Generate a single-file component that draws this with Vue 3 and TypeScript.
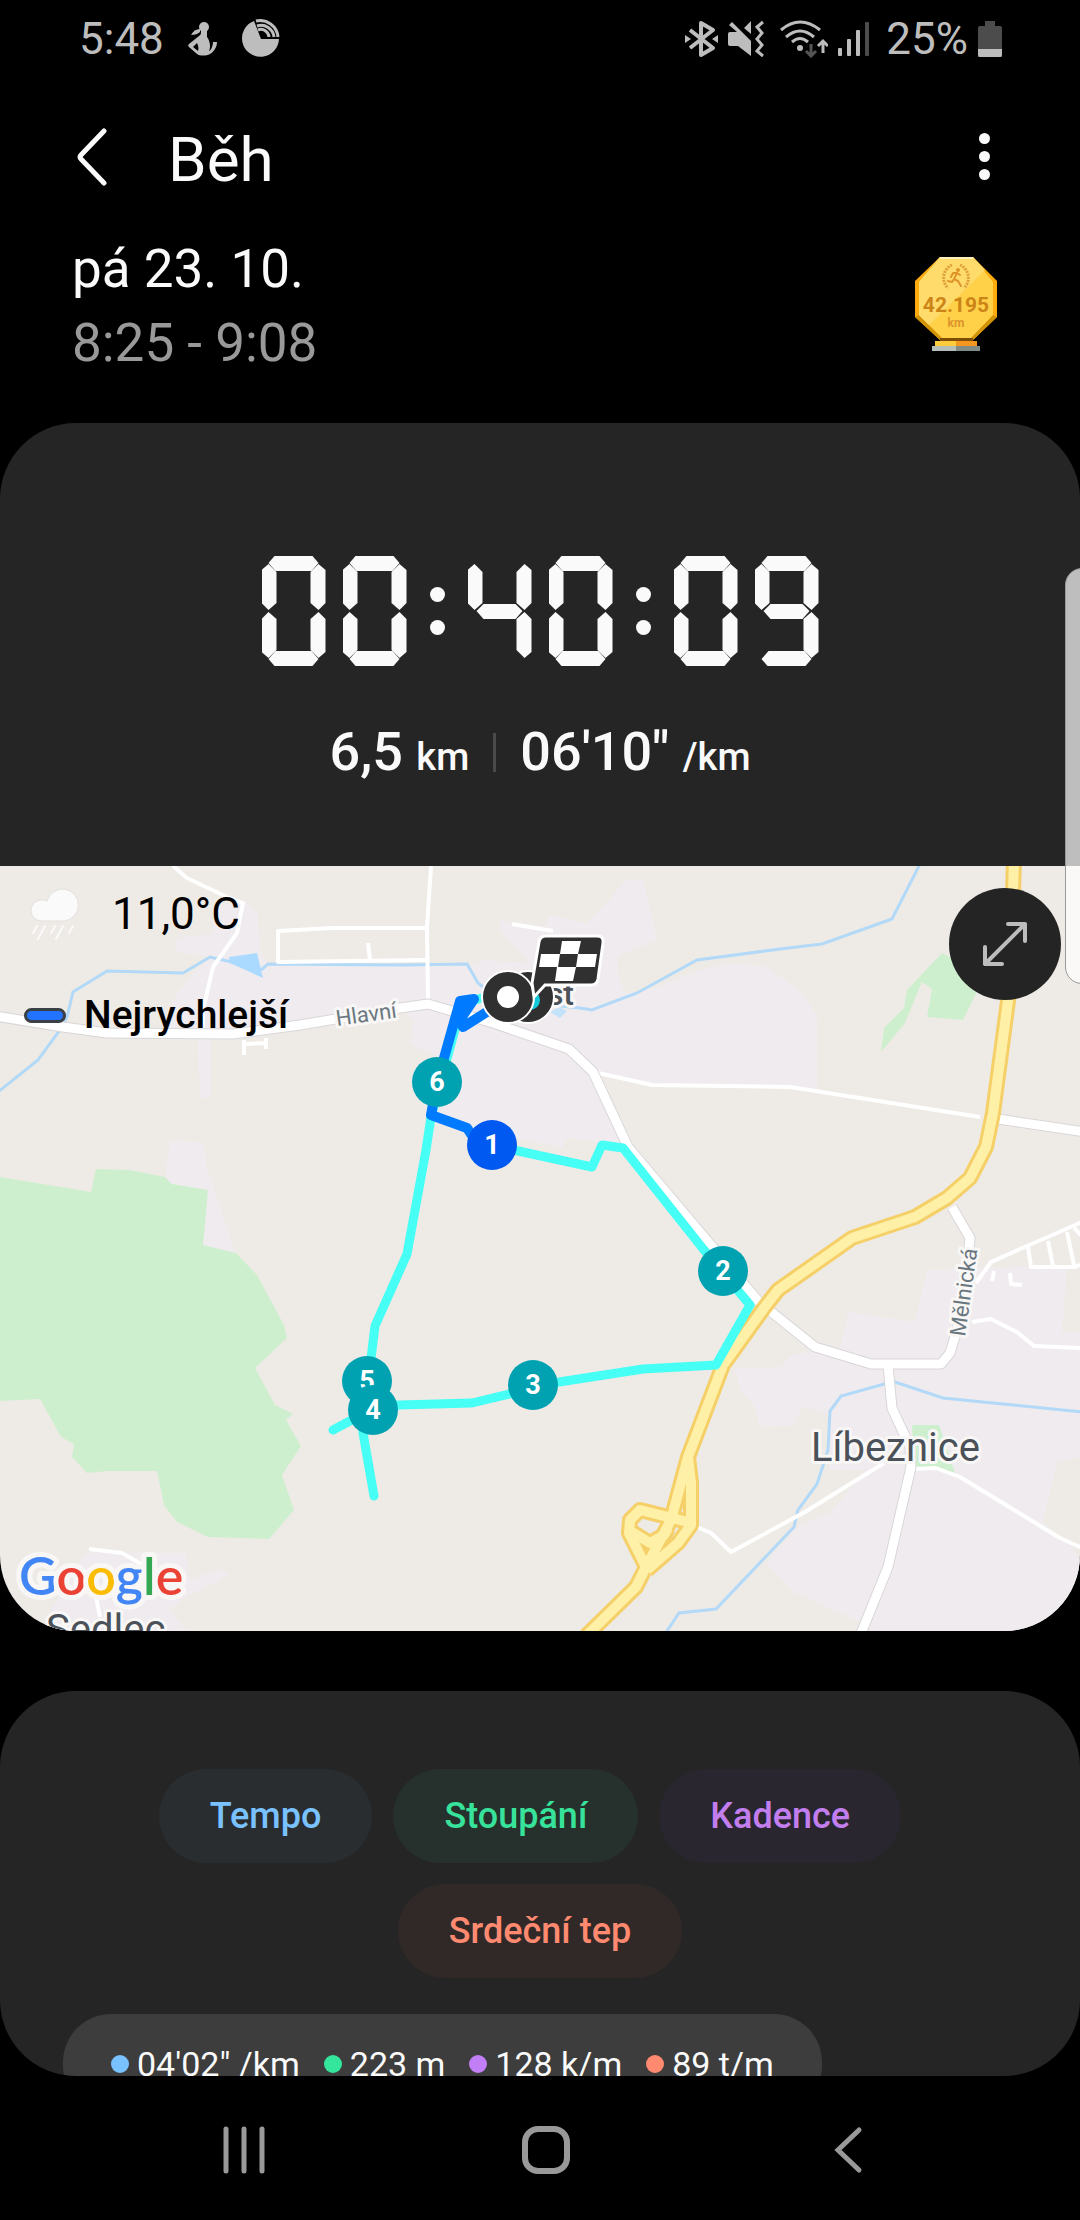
<script setup lang="ts">
interface Chip {
  label: string
  tone: string
}

interface Reading {
  text: string
  tone: string
}

interface Marker {
  n: number
  x: number
  y: number
  tone: string
}

const duration = '00:40:09'

const segmentsOf: Record<string, string> = {
  '0': 'abcdef',
  '1': 'bc',
  '2': 'abdeg',
  '3': 'abcdg',
  '4': 'bcfg',
  '5': 'acdfg',
  '6': 'acdefg',
  '7': 'abc',
  '8': 'abcdefg',
  '9': 'abcdfg',
}

const cells = duration.split('').map((char) => ({
  char,
  lit: (segmentsOf[char] ?? '').split(''),
}))

const chipRows: Chip[][] = [
  [
    { label: 'Tempo', tone: 'blue' },
    { label: 'Stoupání', tone: 'green' },
    { label: 'Kadence', tone: 'violet' },
  ],
  [{ label: 'Srdeční tep', tone: 'coral' }],
]

const readings: Reading[] = [
  { text: '04\'02" /km', tone: 'blue' },
  { text: '223 m', tone: 'green' },
  { text: '128 k/m', tone: 'violet' },
  { text: '89 t/m', tone: 'coral' },
]

const markers: Marker[] = [
  { n: 6, x: 437, y: 1082, tone: '#00a2b1' },
  { n: 5, x: 367, y: 1381, tone: '#00a2b1' },
  { n: 4, x: 373, y: 1410, tone: '#00a2b1' },
  { n: 3, x: 533, y: 1385, tone: '#00a2b1' },
  { n: 2, x: 723, y: 1271, tone: '#00a2b1' },
  { n: 1, x: 492, y: 1145, tone: '#0059f0' },
]

const mainRoads = [
  'M-5 1016 L63 1027 L107 1033 L233 1034 L300 1025 L400 1008 L428 1004 L493 1023 L569 1049 L593 1072 L628 1147 L759 1302 L815 1347 L871 1364 L941 1364 L950 1353 L957 1330 L967 1267 L970 1238 L952 1207',
  'M888 1365 L892 1408 L910 1447 L911 1467 L888 1567 L860 1636',
  'M998 1119 L1085 1132',
]

const sideRoads = [
  'M173 866 L187 878 L227 897 L243 903 L237 933 L213 967 L203 1010 L203 1030',
  'M427 928 H333 L278 931 V962 L427 960',
  'M431 866 L427 927 L428 1000',
  'M368 943 L370 960',
  'M244 1040 V1055 M266 1038 V1049 M244 1044 L266 1043',
  'M512 924 L553 931',
  'M598 1073 L652 1085 L790 1087 L980 1117',
  'M912 1469 L936 1468 L960 1477 L1060 1538 L1082 1548',
  'M884 1463 L805 1512 L731 1552 L711 1533 L697 1527',
  'M972 1322 L991 1319 L1017 1332 L1034 1346 L1082 1348',
  'M976 1283 L991 1262 L1027 1246 L1082 1222',
  'M1028 1247 L1031 1267 H1075 L1082 1264 M1048 1241 L1053 1266 M1067 1232 L1074 1265 M1074 1228 L1082 1236',
  'M994 1271 L992 1281 M1010 1273 L1011 1284 L1022 1285',
  'M89 1549 L122 1553 L148 1568 M96 1597 L100 1617',
]

const streams = [
  'M-2 1092 L38 1060 L60 1030 L67 1017 L73 992 L107 971 L183 973 L210 957 L232 962',
  'M261 970 L268 964 L400 965 L467 964 L478 983 L500 1000 L580 1008 L592 1010 L637 993 L697 960 L780 949 L822 944 L892 919 L920 864',
  'M895 1382 L943 1398 L1082 1412',
  'M888 1383 L841 1396 L830 1411 L828 1450 L817 1484 L798 1510 L794 1527 L716 1609 L679 1613 L665 1634',
]

const builtUp = [
  'M177 938 L212 934 L214 908 L243 901 L257 911 L261 953 L270 966 H470 L483 960 L530 963 L500 932 L500 920 L547 928 L547 915 L587 923 L627 880 L643 880 L657 940 L617 957 L620 983 L627 993 L657 987 L700 970 L733 963 L767 967 L803 993 L817 1017 L817 1090 L790 1087 L652 1085 L598 1073 L625 1145 L567 1138 L562 1148 L500 1134 L440 1115 L447 1060 L410 1045 L413 1020 L400 1008 L300 1025 L233 1034 L211 1036 V1098 L200 1097 L197 1035 L160 1030 L173 1000 L193 973 L210 957 L175 952 Z',
  'M170 1140 L203 1143 L207 1167 L236 1254 L200 1250 L165 1180 Z',
  'M86 1553 H186 L190 1580 L220 1568 L229 1575 L186 1597 L169 1610 L189 1634 H40 L55 1603 Z',
  'M927 1270 L1067 1265 L1062 1332 L1080 1333 V1457 L1057 1462 L1043 1522 L1072 1547 L1080 1560 V1634 H880 L860 1622 L795 1593 L766 1563 L797 1527 L829 1513 L867 1470 L829 1470 V1413 L802 1407 L795 1425 L759 1427 L755 1407 L740 1390 L735 1368 L781 1367 L791 1355 L840 1347 L848 1312 L915 1322 Z',
]

const greens = [
  'M0 1177 L91 1192 L96 1169 L129 1170 L165 1177 L172 1184 L208 1190 L203 1245 L236 1253 L257 1275 L284 1325 L287 1338 L255 1368 L275 1405 L293 1414 L286 1420 L301 1446 L282 1475 L294 1510 L269 1539 L208 1537 L177 1522 L164 1505 L157 1471 H108 L87 1473 L72 1457 L74 1444 L61 1437 L40 1399 L0 1401 Z',
  'M942 953 L985 975 L963 1020 L927 1017 L932 989 L922 982 L905 1023 L881 1052 L884 1028 L904 1008 L907 990 Z',
  'M912 1425 H939 L955 1473 L914 1467 Z',
]

const highways = [
  'M688 1457 L691 1483 V1525 L678 1543 L647 1570',
  'M688 1522 L640 1510 L630 1520 L629 1533 L645 1565',
  'M668 1528 L664 1535 L650 1543 L632 1532',
  'M1014 860 L1013 893 L1008 1001 L993 1113 L986 1147 L970 1178 L947 1198 L915 1217 L852 1238 L778 1290 L764 1308 L723 1365 L688 1457 L671 1520 L647 1565 L636 1587 L586 1636',
]
</script>

<template>
  <div class="screen">
    <header class="status">
      <div class="status-side">
        <span>5:48</span>
        <svg class="ico-person" width="29" height="35" viewBox="0 0 29 35">
          <circle cx="16" cy="6" r="5" />
          <path d="M12 8 C8 8 5 10 3 14 C7 14 10 13 12 11 Z" />
          <path d="M13 10 h6 v6 c3 4 4 10 2 14 c2 0 4 -6 4 -9 l4 0 c0 6 -4 10 -7 12 c-4 2 -10 2 -13 0 l-8 -7 c-1 -1 -1 -2 0 -3 l10 -8 c2 -1 2 -3 2 -5 Z M9 22 l-4 4 l5 4 c1 -3 0 -6 -1 -8 Z" fill-rule="evenodd" />
        </svg>
        <svg width="39" height="39" viewBox="0 0 39 39">
          <path d="M38 20 A18.500 18.500 0 1 1 13 2 L20 20 Z" />
          <g fill="none" stroke="#bdbdbd" stroke-width="3">
            <path d="M17 11 A8 8 0 0 1 28 18" />
            <path d="M16 7 A13 13 0 0 1 33 18" />
            <path d="M15 2 A18 18 0 0 1 37 18" />
          </g>
        </svg>
      </div>
      <div class="status-side right">
        <svg width="33" height="38" viewBox="0 0 33 38">
          <path d="M5 10 L28 28 L16 35 V3 L28 10 L5 28" fill="none" stroke="#bdbdbd" stroke-width="4" stroke-linejoin="round" />
          <path d="M0 15 L6 19 L0 23 Z M33 15 L27 19 L33 23 Z" />
        </svg>
        <svg class="ico-mute" width="36" height="38" viewBox="0 0 36 38">
          <path d="M2 12 H9 L1 5 L4 2 L23 21 V36 L10 26 H2 Q0 26 0 24 V14 Q0 12 2 12 Z M16 8 L23 1 V14 Z" />
          <path d="M35 2 L29 7 L34 13 L29 19 L34 25 L29 31 L35 36" fill="none" stroke="#bdbdbd" stroke-width="3" />
        </svg>
        <svg class="ico-wifi" width="48" height="38" viewBox="0 0 48 38">
          <g fill="none" stroke="#bdbdbd" stroke-width="3">
            <path d="M1 10 Q20 -6 40 10" />
            <path d="M6 17 Q20 5 34 17" />
            <path d="M12 22 Q20 15 28 22" />
            <path d="M43 33 V22 M38 26 L43 21 L48 26" />
            <path d="M31 24 V34 M26 31 L31 36 L36 31" stroke="#555" />
          </g>
          <circle cx="20" cy="28" r="3" />
        </svg>
        <svg class="ico-signal" width="32" height="34" viewBox="0 0 32 34">
          <rect x="0" y="26" width="4" height="8" rx="1" />
          <rect x="9" y="17" width="4" height="17" rx="1" />
          <rect x="18" y="8" width="4" height="26" rx="1" />
          <rect x="27" y="0" width="4" height="34" rx="1" fill="#4c4c4c" />
        </svg>
        <span class="percent">25%</span>
        <svg width="24" height="36" viewBox="0 0 24 36">
          <path d="M7 0 H17 V5 H22 Q24 5 24 7 V36 H0 V7 Q0 5 2 5 H7 Z" fill="#4c4c4c" />
          <path d="M0 28 H24 V34 Q24 36 22 36 H2 Q0 36 0 34 Z" />
        </svg>
      </div>
    </header>

    <div class="appbar">
      <button class="plain back" type="button" aria-label="Zpět">
        <svg width="32" height="58" viewBox="0 0 32 58">
          <path d="M28 3 L5 27 Q3 29 5 31 L28 55" fill="none" stroke="#fafafa" stroke-width="5" stroke-linecap="round" />
        </svg>
      </button>
      <h1>Běh</h1>
      <button class="plain more" type="button" aria-label="Další možnosti">
        <i></i><i></i><i></i>
      </button>
    </div>

    <section class="when">
      <div>
        <p>pá 23. 10.</p>
        <p class="dim">8:25 - 9:08</p>
      </div>
      <svg class="trophy" width="82" height="94" viewBox="0 0 82 94">
        <path d="M25 0 H58 L82 24 V60 L58 83 H25 L0 60 V24 Z" fill="#ffaa0d" />
        <path d="M0 60 L4 58 L27 80 H56 L78 58 L82 60 L58 83 H25 Z" fill="#d19205" />
        <path d="M25 0 H58 L78 25 V58 L56 81 H27 L4 58 V25 Z" fill="#fed149" />
        <path d="M25 0 H58 L70 13 L14 68 L4 58 V25 Z" fill="#ffdb6c" />
        <path d="M25 0 H58 V2 H25 Z" fill="#fff0bd" />
        <path d="M25 81 H58 V84 H25 Z" fill="#7d4d05" />
        <path d="M20 84 H41 V89 H20 Z" fill="#fdcb3b" />
        <path d="M41 84 H62 V89 H41 Z" fill="#f3971f" />
        <path d="M17 89 H41 V94 H17 Z" fill="#b5beb7" />
        <path d="M41 89 H65 V94 H41 Z" fill="#818c85" />
        <g fill="none" stroke="#dda03a" stroke-width="3" stroke-dasharray="2 1">
          <path d="M37 8 A14 14 0 0 0 33 31" />
          <path d="M45 8 A14 14 0 0 1 49 31" />
        </g>
        <g fill="none" stroke="#df9428" stroke-width="2" stroke-linecap="round" stroke-linejoin="round">
          <path d="M42 16 L39 22 L43 24 L46 29 M39 22 L37 25 L33 24" />
          <path d="M36 20 L38 16 L42 16 L45 18" />
          <circle cx="43" cy="13" r="1" />
        </g>
        <text x="41" y="55" text-anchor="middle" font-size="21" font-weight="700" fill="#cd8417">42.195</text>
        <text x="41" y="70" text-anchor="middle" font-size="12" font-weight="700" fill="#dc952b">km</text>
      </svg>
    </section>

    <main class="card summary">
      <time class="timer" datetime="PT40M9S">
        <span class="sr-only">{{ duration }}</span>
        <template v-for="(cell, i) in cells" :key="i">
          <span v-if="cell.char === ':'" class="colon" aria-hidden="true"><i></i><i></i></span>
          <span v-else class="digit" aria-hidden="true">
            <i v-for="s in cell.lit" :key="s" :class="'seg-' + s"></i>
          </span>
        </template>
      </time>

      <div class="stats">
        <span>6,5 <small>km</small></span>
        <span class="divider"></span>
        <span>06'10" <small>/km</small></span>
      </div>

      <div class="map">
        <svg class="map-canvas" viewBox="0 866 1080 765" preserveAspectRatio="xMidYMid slice">
          <rect y="866" width="1080" height="765" fill="#eeebe6" />
          <path v-for="d in builtUp" :key="d" :d="d" fill="#efebef" />
          <path v-for="d in greens" :key="d" :d="d" fill="#ceefce" />
          <g fill="none" stroke="#b2d9f7" stroke-width="3">
            <path v-for="d in streams" :key="d" :d="d" />
          </g>
          <path d="M229 957 L257 953 L263 978 L230 963 Z" fill="#aadaff" />
          <path d="M550 1012 L560 1007 L567 1011 L560 1018 Z" fill="#c4e3fb" />
          <g fill="none" stroke-linejoin="round">
            <path v-for="d in sideRoads" :key="d" :d="d" stroke="#fff" stroke-width="4" />
            <path v-for="d in mainRoads" :key="d" :d="d" stroke="#d9d6d9" stroke-width="11" />
            <path v-for="d in mainRoads" :key="d" :d="d" stroke="#fff" stroke-width="9" />
            <path v-for="d in highways" :key="d" :d="d" stroke="#f5cf68" stroke-width="16" />
            <path v-for="d in highways" :key="d" :d="d" stroke="#fff0a8" stroke-width="10" />
          </g>

          <g class="place" font-size="40">
            <text x="811" y="1461">Líbeznice</text>
            <text x="46" y="1643">Sedlec</text>
            <text x="574" y="1005" font-size="32" font-weight="500" text-anchor="end">st</text>
          </g>
          <g class="street" font-size="22">
            <text transform="translate(337 1026) rotate(-8)">Hlavní</text>
            <text transform="translate(965 1337) rotate(-82)">Mělnická</text>
          </g>

          <g fill="none" stroke="#46fff5" stroke-width="9" stroke-linecap="round" stroke-linejoin="round">
            <path d="M492 1145 L518 1151 L592 1167 L602 1145 L623 1148 L704 1250 L750 1305 L716 1365 L643 1369 L559 1382 L472 1403 L399 1405 L374 1408 L333 1430" />
            <path d="M374 1496 L363 1433 L368 1383 L375 1326 L407 1254 L426 1150 L431 1117 L462 1004 L485 997" />
          </g>
          <path d="M473 1137 L467 1128 L431 1115 L437 1083 L460 1001 L474 999 L460 1020 L463 1027 L490 1010" fill="none" stroke="#007bff" stroke-width="10" stroke-linecap="round" stroke-linejoin="round" />
          <path d="M456 998 L477 996 L460 1028 Z" fill="#007bff" />

          <circle cx="528" cy="997" r="26" fill="#303030" stroke="#fff" stroke-width="2" />
          <circle cx="530" cy="1000" r="10" fill="#14c8dc" />
          <circle cx="508" cy="997" r="26" fill="#303030" stroke="#fff" stroke-width="2" />
          <circle cx="508" cy="997" r="11" fill="#fff" />
          <path d="M546 936 H597 Q604 936 603 943 L598 979 Q597 985 591 985 H545 L534 997 L532 983 L539 942 Q540 936 546 936 Z" fill="#303030" stroke="#fff" stroke-width="3" />
          <path d="M562 941 H581 L578 954 H560 Z M541 954 H560 L558 967 H539 Z M578 954 H597 L595 967 H576 Z M557 967 H576 L573 981 H555 Z" fill="#fff" />

          <g v-for="m in markers" :key="m.n">
            <circle :cx="m.x" :cy="m.y" r="25" :fill="m.tone" />
            <text :x="m.x" :y="m.y + 9" text-anchor="middle" font-size="27" font-weight="700" fill="#fff">{{ m.n }}</text>
          </g>

          <text class="brand" x="19" y="1595" font-size="52">
            <tspan fill="#4285f4">G</tspan><tspan fill="#ea4335">o</tspan><tspan fill="#fbbc05">o</tspan><tspan fill="#4285f4">g</tspan><tspan fill="#34a853">l</tspan><tspan fill="#ea4335">e</tspan>
          </text>
        </svg>

        <div class="map-info">
          <div class="weather">
            <svg width="50" height="52" viewBox="0 0 50 52">
              <path d="M12 33 A10 10 0 0 1 11 12 Q14 11 17 13 A16 16 0 1 1 34 33 Z" fill="#fafafa" stroke="#e3e1de" stroke-width="1" />
              <path d="M7 38 L3 45 M15 38 L8 51 M25 38 L21 45 M33 38 L26 51 M43 38 L39 45" stroke="#fafafa" stroke-width="2" stroke-linecap="round" />
            </svg>
            <span>11,0°C</span>
          </div>
          <div class="fastest"><i></i><span>Nejrychlejší</span></div>
        </div>

        <button class="expand" type="button" aria-label="Zvětšit mapu">
          <svg width="46" height="46" viewBox="0 0 46 46">
            <path d="M26 3 H43 V20 M3 26 V43 H20 M43 3 L3 43" fill="none" stroke="#bdbdbd" stroke-width="4" stroke-linecap="round" stroke-linejoin="round" />
          </svg>
        </button>
      </div>
    </main>

    <section class="card charts">
      <div class="chips">
        <div v-for="(row, i) in chipRows" :key="i" class="chip-row">
          <button v-for="chip in row" :key="chip.label" type="button" class="chip" :class="chip.tone">
            {{ chip.label }}
          </button>
        </div>
      </div>
      <div class="readout">
        <span v-for="r in readings" :key="r.text" class="reading"><i :class="r.tone"></i>{{ r.text }}</span>
      </div>
    </section>

    <nav class="navbar" aria-label="Systémová navigace">
      <button class="plain" type="button" aria-label="Poslední aplikace">
        <svg width="48" height="48" viewBox="0 0 48 48">
          <path d="M6 3 V45 M24 3 V45 M42 3 V45" stroke="#999" stroke-width="5" stroke-linecap="round" />
        </svg>
      </button>
      <button class="plain" type="button" aria-label="Domů">
        <svg width="48" height="48" viewBox="0 0 48 48">
          <rect x="3" y="3" width="42" height="42" rx="13" fill="none" stroke="#999" stroke-width="6" />
        </svg>
      </button>
      <button class="plain" type="button" aria-label="Zpět">
        <svg width="48" height="48" viewBox="0 0 48 48">
          <path d="M35 4 L14 24 L35 44" fill="none" stroke="#999" stroke-width="5" stroke-linecap="round" />
        </svg>
      </button>
    </nav>

    <div class="edge-handle"></div>
  </div>
</template>

<style>
body {
  margin: 0;
  background: #000;
}
</style>

<style scoped>
.screen {
  position: relative;
  display: flex;
  flex-direction: column;
  height: 100vh;
  overflow: hidden;
  background: #000;
  color: #fafafa;
  font-family: Roboto, "Noto Sans", sans-serif;
}

svg {
  display: block;
  flex: none;
}

p,
h1 {
  margin: 0;
  font-weight: 400;
}

.plain {
  display: flex;
  align-items: center;
  justify-content: center;
  padding: 0;
  border: 0;
  background: none;
}

.status {
  display: flex;
  flex: none;
  justify-content: space-between;
  height: 77px;
  padding: 0 78px 0 79px;
  color: #bdbdbd;
  font-size: 44px;
}

.status-side {
  display: flex;
  align-items: center;
  gap: 24px;
}

.status-side.right {
  gap: 10px;
}

.status svg {
  fill: #bdbdbd;
}

.ico-wifi {
  margin-left: 6px;
}

.percent {
  margin-left: 6px;
}

.appbar {
  display: flex;
  flex: none;
  align-items: center;
  height: 151px;
  padding: 4px 90px 0 76px;
}

.back {
  width: 92px;
  justify-content: flex-start;
}

.appbar h1 {
  flex: 1;
  padding-top: 6px;
  font-size: 62px;
  line-height: 74px;
}

.more {
  flex-direction: column;
  gap: 7px;
}

.more i {
  width: 11px;
  height: 11px;
  border-radius: 50%;
  background: #fafafa;
}

.when {
  display: flex;
  flex: none;
  align-items: center;
  justify-content: space-between;
  margin-bottom: 43px;
  padding: 0 83px 0 72px;
  font-size: 53px;
  line-height: 74px;
}

.trophy {
  margin-bottom: 4px;
}

.dim {
  color: #999;
}

.card {
  background: #252525;
  border-radius: 76px;
  overflow: hidden;
}

.summary {
  flex: none;
  margin-bottom: 60px;
}

.timer {
  position: relative;
  display: flex;
  justify-content: center;
  gap: 17px;
  padding-top: 133px;
}

.sr-only {
  position: absolute;
  width: 1px;
  height: 1px;
  overflow: hidden;
  clip-path: inset(50%);
}

.digit {
  display: grid;
  width: 64px;
  height: 110px;
}

.digit i {
  grid-area: 1 / 1;
  background: #fafafa;
}

.seg-a {
  clip-path: polygon(13px 0, 51px 0, 57px 7px, 50px 15px, 14px 15px, 7px 7px);
}

.seg-b {
  clip-path: polygon(57px 8px, 64px 14px, 64px 47px, 57px 54px, 49px 47px, 49px 16px);
}

.seg-c {
  clip-path: polygon(57px 56px, 64px 63px, 64px 96px, 57px 102px, 49px 94px, 49px 63px);
}

.seg-d {
  clip-path: polygon(14px 95px, 50px 95px, 57px 103px, 51px 110px, 13px 110px, 7px 103px);
}

.seg-e {
  clip-path: polygon(7px 56px, 15px 63px, 15px 94px, 7px 102px, 0 96px, 0 63px);
}

.seg-f {
  clip-path: polygon(7px 8px, 15px 16px, 15px 47px, 7px 54px, 0 47px, 0 14px);
}

.seg-g {
  clip-path: polygon(9px 55px, 16px 48px, 48px 48px, 55px 55px, 48px 63px, 16px 63px);
}

.colon {
  display: flex;
  flex-direction: column;
  justify-content: center;
  gap: 18px;
  margin: 0 6px;
}

.colon i {
  width: 15px;
  height: 15px;
  border-radius: 50%;
  background: #fafafa;
}

.stats {
  display: flex;
  align-items: center;
  justify-content: center;
  gap: 24px;
  padding: 54px 0 82px;
  font-size: 54px;
  font-weight: 500;
  line-height: 64px;
}

.stats small {
  font-size: 38px;
  line-height: 38px;
}

.divider {
  width: 3px;
  height: 39px;
  background: #4a4a4a;
}

.map {
  position: relative;
  height: 765px;
}

.map-canvas {
  width: 100%;
  height: 100%;
}

.place {
  fill: #4b5159;
  stroke: #f8f7f6;
  stroke-width: 6px;
  stroke-linejoin: round;
  paint-order: stroke;
}

.street {
  fill: #6b7780;
  stroke: #f8f7f6;
  stroke-width: 6px;
  stroke-linejoin: round;
  paint-order: stroke;
}

.brand {
  font-family: Lato, "Noto Sans", sans-serif;
  font-weight: 600;
  stroke: #f8f7f6;
  stroke-width: 10px;
  stroke-linejoin: round;
  paint-order: stroke;
}

.map-info {
  position: absolute;
  top: 18px;
  left: 24px;
  color: #000;
}

.weather {
  display: flex;
  align-items: center;
  gap: 32px;
  padding-left: 6px;
  font-size: 44px;
  line-height: 60px;
}

.fastest {
  display: flex;
  align-items: center;
  gap: 18px;
  margin-top: 44px;
  font-size: 39px;
  font-weight: 500;
  line-height: 54px;
}

.fastest i {
  width: 36px;
  height: 9px;
  border: 3px solid #3b4046;
  border-radius: 8px;
  background: #2273ff;
}

.expand {
  position: absolute;
  top: 22px;
  right: 19px;
  display: flex;
  align-items: center;
  justify-content: center;
  width: 112px;
  height: 112px;
  padding: 0;
  border: 0;
  border-radius: 50%;
  background: #242424;
}

.charts {
  flex: 1;
  min-height: 0;
  padding: 78px 63px 0;
}

.chips {
  display: flex;
  flex-direction: column;
  gap: 21px;
}

.chip-row {
  display: flex;
  justify-content: center;
  gap: 21px;
}

.chip-row:first-child {
  padding-right: 20px;
}

.chip {
  padding: 0 51px;
  border: 0;
  border-radius: 47px;
  font: 500 36px/94px Roboto, "Noto Sans", sans-serif;
}

.chip.blue {
  background: #292d30;
  color: #7ac2ff;
}

.chip.green {
  background: #26302c;
  color: #37e39b;
}

.chip.violet {
  background: #29262f;
  color: #c27eef;
}

.chip.coral {
  background: #302928;
  color: #ff8a70;
}

.readout {
  display: flex;
  gap: 24px;
  width: max-content;
  margin-top: 36px;
  padding: 30px 48px;
  border-radius: 48px;
  background: #3d3d3d;
  font-size: 34px;
  line-height: 40px;
}

.reading {
  display: flex;
  align-items: center;
  gap: 8px;
}

.reading i {
  width: 18px;
  height: 18px;
  border-radius: 50%;
}

.reading .blue {
  background: #7ac2ff;
}

.reading .green {
  background: #33e69c;
}

.reading .violet {
  background: #c27ef5;
}

.reading .coral {
  background: #ff8a70;
}

.navbar {
  display: grid;
  flex: none;
  grid-template-columns: repeat(3, 1fr);
  height: 140px;
  padding: 4px 81px 0 93px;
}

.edge-handle {
  position: absolute;
  top: 568px;
  right: -20px;
  width: 33px;
  height: 414px;
  border: 1px solid #999;
  border-radius: 17px;
  background: rgba(255, 255, 255, 0.7);
}
</style>
